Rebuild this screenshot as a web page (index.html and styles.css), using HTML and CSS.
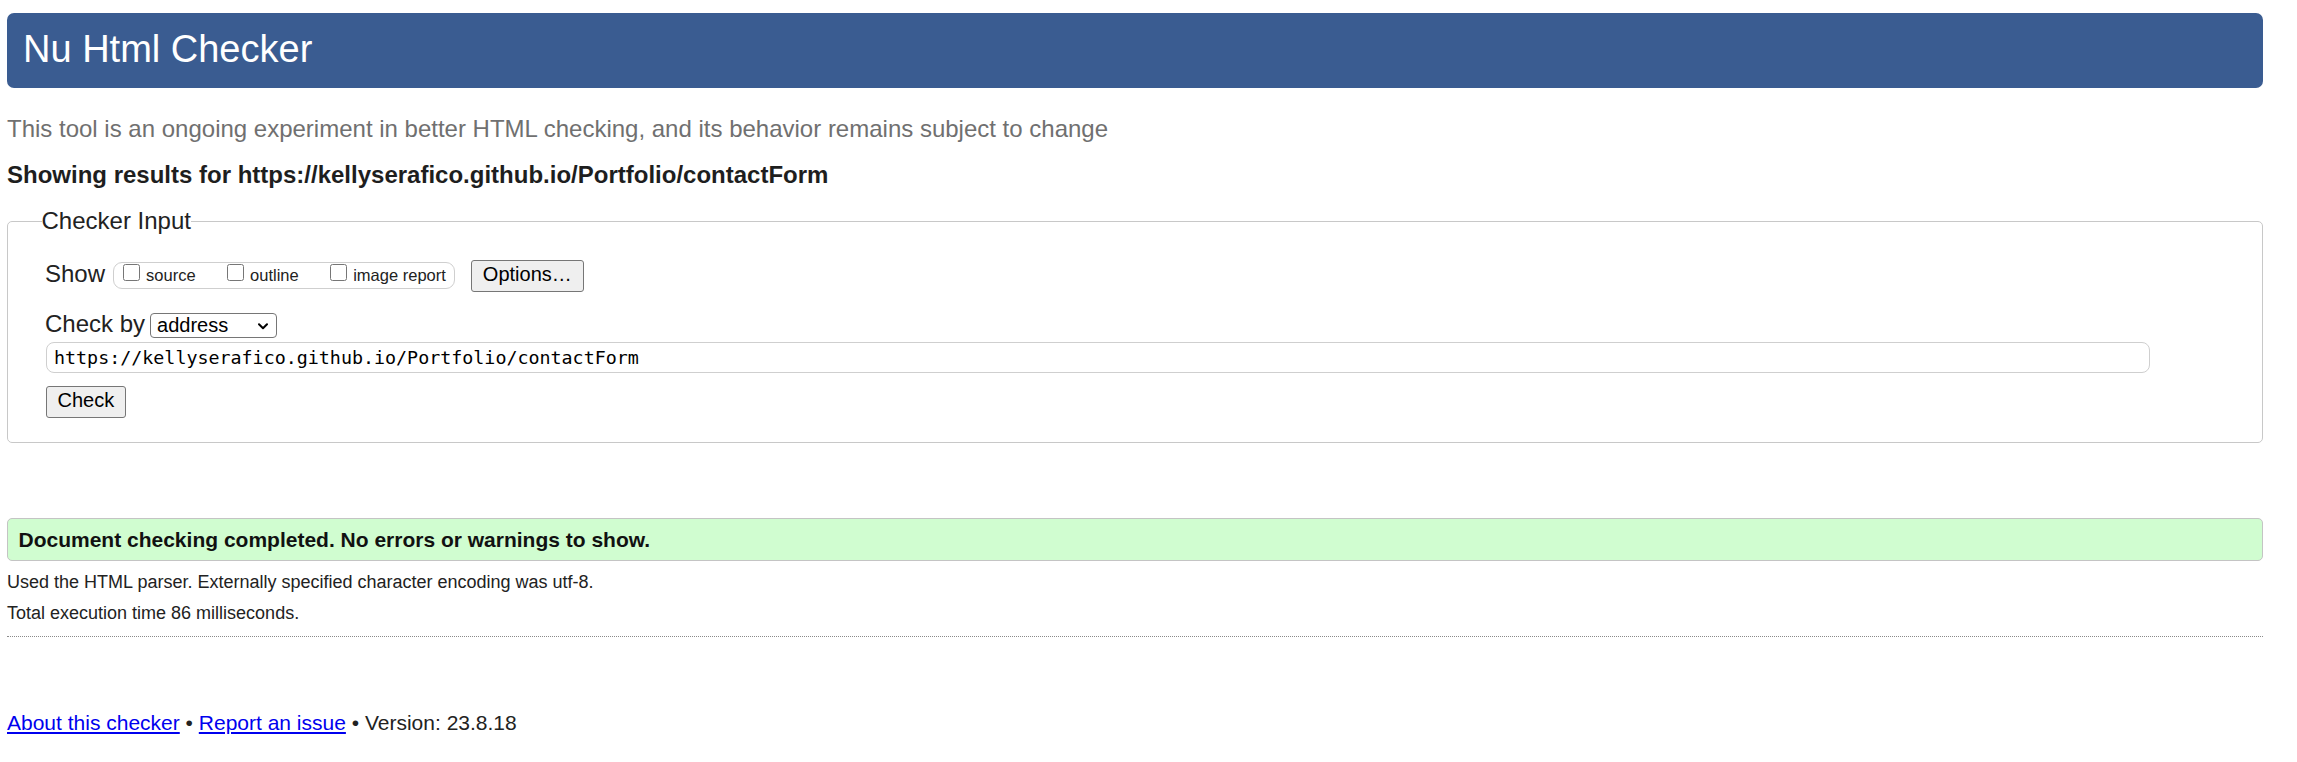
FILE: index.html
```html
<!DOCTYPE html>
<html lang="en">
<head>
<meta charset="utf-8">
<title>Showing results for https://kellyserafico.github.io/Portfolio/contactForm - Nu Html Checker</title>
<link rel="stylesheet" href="styles.css">
</head>
<body>
<h1 class="title">Nu Html Checker</h1>
<p class="intro">This tool is an ongoing experiment in better HTML checking, and its behavior remains subject to change</p>
<p class="results-for">Showing results for https://kellyserafico.github.io/Portfolio/contactForm</p>
<form class="checker-form">
  <fieldset class="checker-input">
    <legend class="legend">Checker Input</legend>
    <div class="row row-show">
      <span class="row-label">Show</span>
      <span class="pill">
        <label class="opt"><input type="checkbox" class="cb"><span class="opt-text">source</span></label>
        <label class="opt"><input type="checkbox" class="cb"><span class="opt-text">outline</span></label>
        <label class="opt"><input type="checkbox" class="cb"><span class="opt-text">image report</span></label>
      </span>
      <button type="button" class="btn btn-options">Options…</button>
    </div>
    <div class="row row-checkby">
      <label class="row-label" for="docselect">Check by</label>
      <span class="select-wrap">
        <select id="docselect" class="select"><option>address</option></select>
        <svg class="chevron" width="10" height="7" viewBox="0 0 10 7"><path d="M1 1.2 L5 5.2 L9 1.2" fill="none" stroke="#000" stroke-width="2" stroke-linecap="round" stroke-linejoin="round"/></svg>
      </span>
    </div>
    <input class="url" type="url" value="https://kellyserafico.github.io/Portfolio/contactForm">
    <div class="row row-submit">
      <button type="button" class="btn btn-check">Check</button>
    </div>
  </fieldset>
</form>
<p class="success">Document checking completed. No errors or warnings to show.</p>
<p class="details details-first">Used the HTML parser. Externally specified character encoding was utf-8.</p>
<p class="details">Total execution time 86 milliseconds.</p>
<hr class="sep">
<p class="footer"><a class="link" href="#">About this checker</a> • <a class="link" href="#">Report an issue</a> • Version: 23.8.18</p>
</body>
</html>
```

FILE: styles.css
```css
* {
  box-sizing: border-box;
}

html,
body {
  margin: 0;
}

body {
  background: #fff;
  color: #222;
  font-family: "Liberation Sans", Arial, sans-serif;
  padding: 13px 34px 0 7px;
}

.title {
  margin: 0;
  height: 75px;
  padding: 0 16px 3px;
  line-height: 72px;
  font-size: 38px;
  font-weight: normal;
  color: #fff;
  background: #3a5c91;
  border-radius: 7px;
}

.intro {
  margin: 27px 0 0;
  font-size: 24px;
  line-height: 28px;
  color: #707070;
}

.results-for {
  margin: 18px 0 0;
  font-size: 24px;
  line-height: 28px;
  font-weight: bold;
  color: #1e1e1e;
}

.checker-form {
  margin: 18px 0 0;
}

.checker-input {
  margin: 0;
  min-width: 0;
  padding: 24px 12px 24px 37px;
  border: 1px solid #c8c8c8;
  border-radius: 5px;
}

.legend {
  padding: 0;
  margin-left: -3.5px;
  font-size: 24px;
  line-height: 28px;
  color: #222;
}

.row {
  display: flex;
  align-items: flex-start;
}

.row-label {
  font-size: 24px;
  line-height: 28px;
  color: #222;
}

.row-show .row-label {
  margin-top: 1px;
}

.pill {
  display: flex;
  align-items: flex-start;
  gap: 31px;
  height: 27px;
  margin: 3px 0 0 8px;
  padding: 0 8px 0 8.5px;
  border: 1px solid #cfcfcf;
  border-radius: 9px;
}

.opt {
  display: flex;
  align-items: flex-start;
}

.cb {
  width: 17px;
  height: 17px;
  margin: 0.5px 6.5px 0 0;
}

.opt-text {
  font-size: 16.5px;
  line-height: 25px;
  color: #222;
}

.btn {
  height: 32px;
  padding: 0 11px 3px;
  font-family: "Liberation Sans", Arial, sans-serif;
  font-size: 20px;
  line-height: 27px;
  color: #000;
  background: #efefef;
  border: 1px solid #767676;
  border-radius: 3px;
}

.btn-options {
  margin: 1px 0 0 16px;
}

.row-checkby {
  margin-top: 18px;
}

.select-wrap {
  position: relative;
  display: block;
  margin: 3px 0 0 5px;
}

.select {
  display: block;
  width: 127px;
  height: 25px;
  margin: 0;
  padding: 0 26px 0 6px;
  font-family: "Liberation Sans", Arial, sans-serif;
  font-size: 20px;
  line-height: 23px;
  color: #000;
  background: #fff;
  border: 1px solid #767676;
  border-radius: 4px;
  appearance: none;
  -webkit-appearance: none;
}

.chevron {
  position: absolute;
  right: 9px;
  top: 10px;
  pointer-events: none;
}

.url {
  display: block;
  width: 95.4%;
  height: 31px;
  margin: 4px 0 0 1px;
  padding: 0 7px;
  font-family: "DejaVu Sans Mono", "Liberation Mono", monospace;
  font-size: 18.33px;
  color: #000;
  background: #fff;
  border: 1px solid #cfcfcf;
  border-radius: 8px;
}

.row-submit {
  margin-top: 13px;
}

.btn-check {
  margin-left: 1px;
  padding: 0 10.5px 3px;
}

.success {
  margin: 75px 0 0;
  padding: 0 10.5px;
  font-size: 21px;
  line-height: 41px;
  font-weight: bold;
  color: #111;
  background: #d0fdd0;
  border: 1px solid #c4c4c4;
  border-radius: 5px;
}

.details {
  margin: 0;
  font-size: 18px;
  line-height: 30.5px;
  color: #222;
}

.details-first {
  margin-top: 6px;
}

.sep {
  height: 0;
  margin: 8px 0 0;
  border: 0;
  border-top: 1px dotted #8a8a8a;
}

.footer {
  margin: 71.5px 0 0;
  font-size: 21px;
  line-height: 28px;
  color: #222;
}

.link {
  color: #0000ee;
  text-decoration: underline;
}
```
